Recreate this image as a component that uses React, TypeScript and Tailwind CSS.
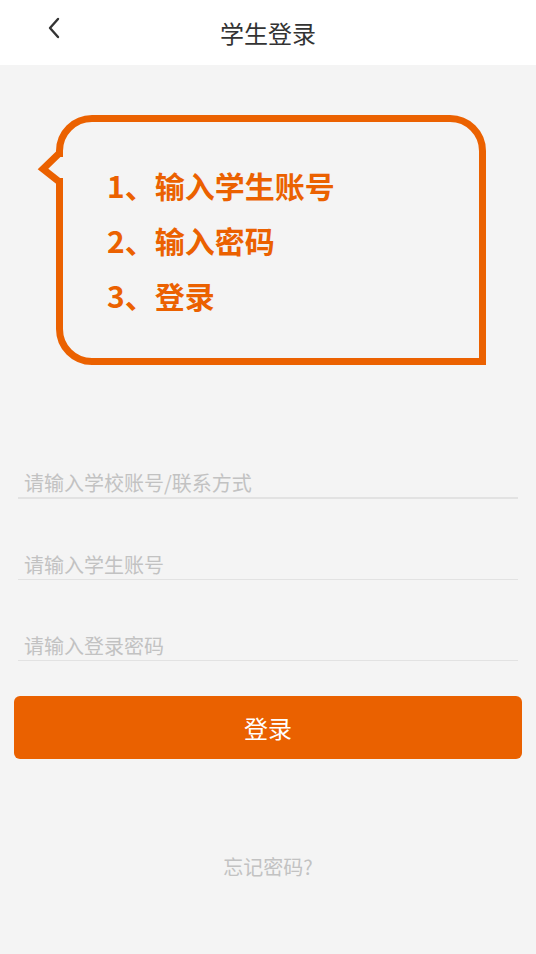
import React, { useState } from 'react';

const BackIcon = () => (
  <svg width="16" height="24" viewBox="0 0 16 24" fill="none">
    <polyline points="12,2 4,11 12,20" stroke="#333" strokeWidth="2.4" strokeLinecap="round" strokeLinejoin="round" />
  </svg>
);

const steps = ['1、输入学生账号', '2、输入密码', '3、登录'];

const App: React.FC = () => {
  const [school, setSchool] = useState('');
  const [account, setAccount] = useState('');
  const [password, setPassword] = useState('');

  return (
    <div className="min-h-[954px] bg-[#f4f4f4] font-['Noto_Sans_CJK_SC',sans-serif]">
      <header className="h-[65px] bg-white flex items-center relative">
        <button className="absolute left-[46px] top-[17px]">
          <BackIcon />
        </button>
        <h1 className="flex-1 text-center text-[24px] text-[#333] leading-none">学生登录</h1>
      </header>

      {/* speech bubble */}
      <div className="relative ml-[56px] mt-[50px] w-[430px] h-[250px] border-[7px] border-[#eb6100] rounded-tl-[36px] rounded-tr-[36px] rounded-bl-[36px] rounded-br-none pl-[44px] pt-[36px]">
        <svg className="absolute left-[-27px] top-[28px]" width="30" height="36" viewBox="0 0 30 36">
          <rect x="19" y="7" width="9" height="21" fill="#f4f4f4" />
          <polyline points="23.5,3 7,19 23.5,32" fill="none" stroke="#eb6100" strokeWidth="7" strokeLinejoin="miter" />
        </svg>
        {steps.map(s => (
          <p key={s} className="text-[30px] font-bold text-[#eb6100] leading-[55px]">{s}</p>
        ))}
      </div>

      <div className="px-[18px] mt-[103px]">
        <input
          value={school}
          onChange={e => setSchool(e.target.value)}
          placeholder="请输入学校账号/联系方式"
          className="w-full h-[31px] pl-[6px] text-[20px] leading-[30px] bg-transparent border-b-2 border-[#e2e2e2] outline-none text-[#333] placeholder:text-[#c2c2c2]"
        />
        <input
          value={account}
          onChange={e => setAccount(e.target.value)}
          placeholder="请输入学生账号"
          className="w-full h-[31px] mt-[50px] pl-[6px] text-[20px] leading-[30px] bg-transparent border-b border-[#e2e2e2] outline-none text-[#333] placeholder:text-[#c2c2c2]"
        />
        <input
          type="password"
          value={password}
          onChange={e => setPassword(e.target.value)}
          placeholder="请输入登录密码"
          className="w-full h-[31px] mt-[50px] pl-[6px] text-[20px] leading-[30px] bg-transparent border-b border-[#e2e2e2] outline-none text-[#333] placeholder:text-[#c2c2c2]"
        />
      </div>

      <div className="px-[14px] mt-[35px]">
        <button className="w-full h-[63px] rounded-[6px] bg-[#ea6100] text-white text-[24px]">登录</button>
      </div>

      <p className="mt-[94px] text-center text-[20px] leading-[28px] text-[#c2c2c2]">忘记密码?</p>
    </div>
  );
};

export default App;
